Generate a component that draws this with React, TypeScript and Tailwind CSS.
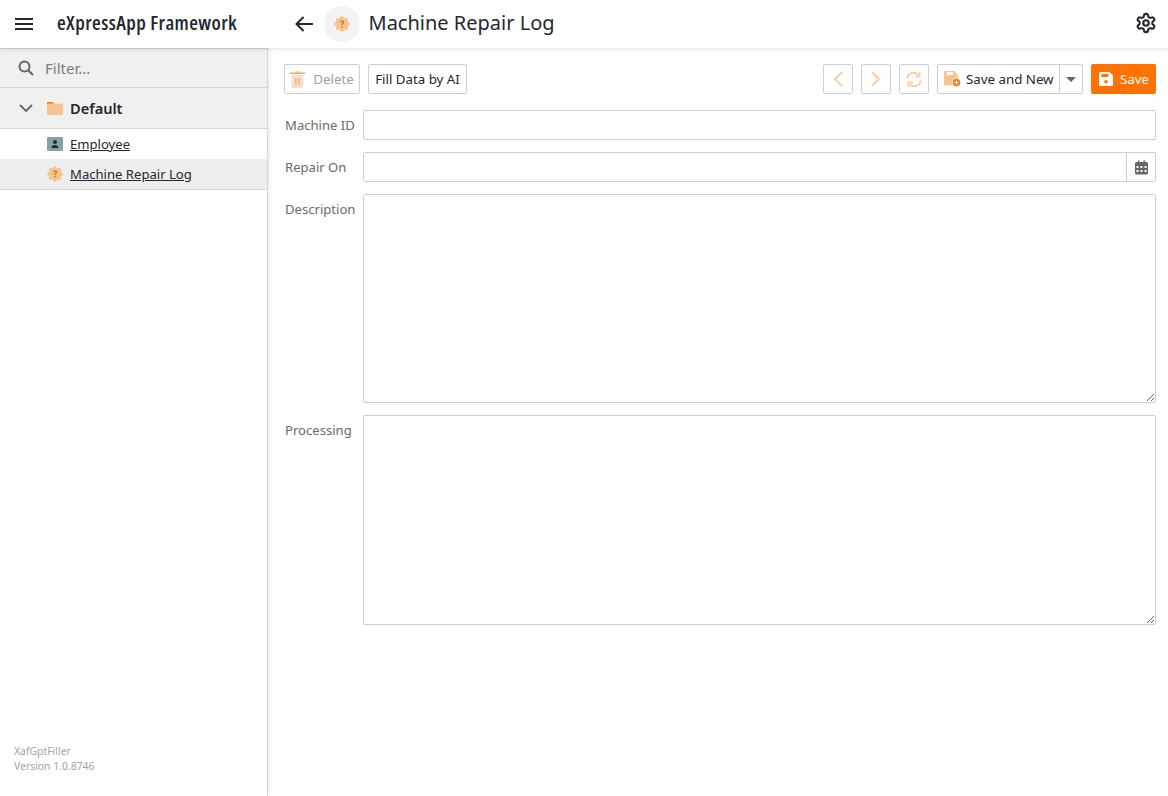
import React from "react";

const Btn = ({ children, className = "" }: { children: React.ReactNode; className?: string }) => (
  <button className={`h-[30px] flex items-center justify-center border border-[#ccd0d6] rounded-[2px] bg-white text-[13.3px] whitespace-nowrap ${className}`}>
    {children}
  </button>
);

const Badge = ({ size }: { size: number }) => (
  <svg width={size} height={size} viewBox="0 0 16 16">
    <g fill="#f6c48f">
      <circle cx="8" cy="8" r="6.2" />
      <circle cx="8" cy="2.2" r="2" />
      <circle cx="8" cy="13.8" r="2" />
      <circle cx="2.2" cy="8" r="2" />
      <circle cx="13.8" cy="8" r="2" />
      <circle cx="3.9" cy="3.9" r="2" />
      <circle cx="12.1" cy="3.9" r="2" />
      <circle cx="3.9" cy="12.1" r="2" />
      <circle cx="12.1" cy="12.1" r="2" />
    </g>
    <path d="M5.8 6.2C5.9 4.9 6.8 4.2 8.1 4.2c1.3 0 2.2.8 2.2 1.9 0 .9-.5 1.4-1.1 1.8-.4.3-.5.5-.5 1H7.3c0-1 .3-1.5 1-1.9.4-.3.6-.5.6-.9 0-.4-.3-.7-.8-.7-.5 0-.8.3-.9.8zM7.2 10h1.5v1.6H7.2z" fill="#d9741c" />
  </svg>
);

const Field = ({ label, children, top = "items-center" }: { label: string; children: React.ReactNode; top?: string }) => (
  <div className={`flex ${top}`}>
    <label className={`w-[79px] shrink-0 pl-px text-[13.1px] leading-[20px] text-[#6f6a66] ${top === "items-start" ? "pt-[5px]" : ""}`}>{label}</label>
    {children}
  </div>
);

export default function App() {
  return (
    <div className="w-[1168px] h-[796px] overflow-hidden bg-white flex flex-col text-[#1f2530] font-['Noto_Sans','Open_Sans',sans-serif]">
      <header className="relative z-20 h-[48px] shrink-0 flex items-center bg-white shadow-[0_1px_4px_rgba(0,0,0,0.12)]">
        <div className="w-[268px] shrink-0 flex items-center">
          <svg className="ml-[15px]" width="18" height="14" viewBox="0 0 18 14">
            <path d="M0 2h18M0 7h18M0 12h18" stroke="#23272f" strokeWidth="2" fill="none" />
          </svg>
          <span className="ml-[24px] -mt-[2px] text-[20px] tracking-[0.4px] font-semibold whitespace-nowrap text-[#23272f] font-['Open_Sans',sans-serif] font-stretch-[87%]">
            eXpressApp Framework
          </span>
        </div>
        <svg className="ml-[27px] -mt-[1px]" width="18" height="16" viewBox="0 0 18 16">
          <path d="M18 8H1.5M8.5 1L1.5 8l7 7" stroke="#23272f" strokeWidth="2" fill="none" />
        </svg>
        <div className="ml-[11px] w-[36px] h-[36px] rounded-full bg-[#f3f3f3] flex items-center justify-center">
          <Badge size={16} />
        </div>
        <h1 className="ml-[8.5px] -mt-[2px] text-[20px] font-normal text-[#23272f]">Machine Repair Log</h1>
        <svg className="ml-auto mr-[11px] -mt-[2px]" width="22" height="22" viewBox="0 0 24 24" fill="none" stroke="#23272f" strokeWidth="2.3" strokeLinecap="round" strokeLinejoin="round">
          <path d="M12.22 2h-.44a2 2 0 0 0-2 2v.18a2 2 0 0 1-1 1.73l-.43.25a2 2 0 0 1-2 0l-.15-.08a2 2 0 0 0-2.73.73l-.22.38a2 2 0 0 0 .73 2.73l.15.1a2 2 0 0 1 1 1.72v.51a2 2 0 0 1-1 1.74l-.15.09a2 2 0 0 0-.73 2.73l.22.38a2 2 0 0 0 2.73.73l.15-.08a2 2 0 0 1 2 0l.43.25a2 2 0 0 1 1 1.73V20a2 2 0 0 0 2 2h.44a2 2 0 0 0 2-2v-.18a2 2 0 0 1 1-1.73l.43-.25a2 2 0 0 1 2 0l.15.08a2 2 0 0 0 2.73-.73l.22-.39a2 2 0 0 0-.73-2.73l-.15-.08a2 2 0 0 1-1-1.74v-.5a2 2 0 0 1 1-1.74l.15-.09a2 2 0 0 0 .73-2.73l-.22-.38a2 2 0 0 0-2.73-.73l-.15.08a2 2 0 0 1-2 0l-.43-.25a2 2 0 0 1-1-1.73V4a2 2 0 0 0-2-2z" />
          <circle cx="12" cy="12" r="3" />
        </svg>
      </header>

      <div className="flex flex-1 min-h-0">
        <aside className="relative z-10 w-[268px] shrink-0 flex flex-col bg-white border-r border-[#d3d6dc] shadow-[1px_0_4px_rgba(0,0,0,0.1)]">
          <div className="h-[40px] flex items-center bg-[#f0f0f0] border-t border-b border-[#d3d6dc]">
            <svg className="ml-[18px]" width="16" height="16" viewBox="0 0 16 16" fill="none" stroke="#666" strokeWidth="2">
              <circle cx="6.5" cy="6.5" r="5" />
              <path d="M10.2 10.2L15 15" />
            </svg>
            <span className="ml-[11px] text-[15px] text-[#7b7b7b]">Filter...</span>
          </div>
          <div className="h-[41px] flex items-center bg-[#f0f0f0] border-b border-[#d3d6dc]">
            <svg className="ml-[19px]" width="14" height="9" viewBox="0 0 14 9" fill="none" stroke="#666" strokeWidth="1.8">
              <path d="M1 1l6 6 6-6" />
            </svg>
            <svg className="ml-[14px]" width="16" height="14" viewBox="0 0 16 14">
              <path d="M0 2a1 1 0 0 1 1-1h4.5l1.5 1.5V4H0z" fill="#e07b1a" />
              <rect x="0" y="2.5" width="16" height="11.5" rx="1.5" fill="#f6c48f" />
            </svg>
            <span className="ml-[7px] mt-[2px] text-[14.6px] font-semibold text-[#23272f]">Default</span>
          </div>
          <div className="h-[30px] flex items-center">
            <svg className="ml-[47px]" width="16" height="14" viewBox="0 0 16 14">
              <rect width="16" height="14" rx="1" fill="#87a3a0" />
              <circle cx="8" cy="5" r="2" fill="#1c2a3a" />
              <path d="M4.5 11c0-2 1.5-3 3.5-3s3.5 1 3.5 3z" fill="#1c2a3a" />
            </svg>
            <span className="ml-[7px] mt-[2px] text-[13.1px] underline text-[#23272f]">Employee</span>
          </div>
          <div className="h-[31px] flex items-center bg-[#eeeeee] border-b border-[#d3d6dc]">
            <div className="ml-[47px] flex"><Badge size={16} /></div>
            <span className="ml-[7px] mt-[2px] text-[13.1px] underline text-[#23272f]">Machine Repair Log</span>
          </div>
          <div className="mt-auto pl-[14px] pb-[22px] text-[10.4px] leading-[15px] text-[#a3a3a3]">
            <div>XafGptFiller</div>
            <div>Version 1.0.8746</div>
          </div>
        </aside>

        <main className="flex-1 min-w-0 pl-[16px] pr-[12px] pt-[16px]">
          <div className="flex items-center">
            <Btn className="w-[76px] text-[#a0a0a0] gap-[8px]">
              <svg width="15" height="17" viewBox="0 0 15 17">
                <path d="M0 1.5h15V3H0z" fill="#f0a877" />
                <path d="M5 .5h5v1H5z" fill="#f0a877" />
                <path d="M1.5 4h12v11.5a1.5 1.5 0 0 1-1.5 1.5H3a1.5 1.5 0 0 1-1.5-1.5z" fill="#f6dfcb" />
                <path d="M5 7h1.6v7H5zM8.4 7H10v7H8.4z" fill="#eeb68a" />
              </svg>
              <span className="mt-[2px]">Delete</span>
            </Btn>
            <Btn className="ml-[8px] w-[99px] text-[#23272f]"><span className="mt-[2px]">Fill Data by AI</span></Btn>
            <Btn className="ml-auto w-[30px]">
              <svg width="10" height="16" viewBox="0 0 10 16" fill="none" stroke="#f6cfa4" strokeWidth="2"><path d="M9 1L2 8l7 7" /></svg>
            </Btn>
            <Btn className="ml-[8px] w-[30px]">
              <svg width="10" height="16" viewBox="0 0 10 16" fill="none" stroke="#f6cfa4" strokeWidth="2"><path d="M1 1l7 7-7 7" /></svg>
            </Btn>
            <Btn className="ml-[8px] w-[30px]">
              <svg width="16" height="15" viewBox="0 0 16 15" fill="none" stroke="#f6cfa4" strokeWidth="2">
                <path d="M1.5 6.5A6 6 0 0 1 12.5 3.5M14.5 8.5A6 6 0 0 1 3.5 11.5" />
                <path d="M13.6 0v4.6H9M2.4 15v-4.6H7" strokeWidth="1.6" />
              </svg>
            </Btn>
            <div className="ml-[8px] h-[30px] flex border border-[#ccd0d6] rounded-[2px] text-[13.3px] whitespace-nowrap">
              <div className="w-[122px] flex items-center pl-[6px] gap-[5px] border-r border-[#ccd0d6] text-[#23272f]">
                <svg width="17" height="16" viewBox="0 0 17 16">
                  <path d="M0 1.5A1.5 1.5 0 0 1 1.5 0H10l4 4v9a1.5 1.5 0 0 1-1.5 1.5h-11A1.5 1.5 0 0 1 0 13z" fill="#f6c48f" />
                  <rect x="3" y="1" width="6" height="3" fill="#fff" />
                  <circle cx="12.5" cy="11.5" r="4.2" fill="#e07b1a" stroke="#fff" strokeWidth="0.8" />
                  <path d="M10.5 11.5h4M12.5 9.5v4" stroke="#fff" strokeWidth="1.2" />
                </svg>
                <span className="mt-[2px]">Save and New</span>
              </div>
              <div className="w-[22px] flex items-center justify-center">
                <svg width="10" height="5" viewBox="0 0 10 5"><path d="M0 0h10L5 5z" fill="#666" /></svg>
              </div>
            </div>
            <button className="ml-[8px] w-[65px] h-[30px] flex items-center justify-center gap-[7px] pl-px rounded-[2px] bg-[#ff7200] text-white text-[13.3px]">
              <svg width="14" height="14" viewBox="0 0 14 14">
                <path fillRule="evenodd" fill="#fff" d="M1.5 0H10.5L14 3.5V12.5A1.5 1.5 0 0 1 12.5 14H1.5A1.5 1.5 0 0 1 0 12.5V1.5A1.5 1.5 0 0 1 1.5 0ZM2.5 2V5H9.5V2ZM7 8A1.8 1.8 0 1 0 7 11.6 1.8 1.8 0 1 0 7 8Z" />
              </svg>
              <span className="mt-[2px]">Save</span>
            </button>
          </div>

          <div className="mt-[16px] flex flex-col gap-[12px]">
            <Field label="Machine ID">
              <input className="flex-1 h-[30px] border border-[#ccd0d6] rounded-[2px] outline-none" />
            </Field>
            <Field label="Repair On">
              <div className="flex-1 h-[30px] flex border border-[#ccd0d6] rounded-[2px]">
                <input className="flex-1 min-w-0 outline-none" />
                <div className="w-[29px] flex items-center justify-center border-l border-[#ccd0d6]">
                  <svg width="13" height="15" viewBox="0 0 13 14">
                    <path fillRule="evenodd" fill="#666" d="M3 0h1.5v1.5h4V0H10v1.5h1.5A1.5 1.5 0 0 1 13 3v9.5a1.5 1.5 0 0 1-1.5 1.5h-10A1.5 1.5 0 0 1 0 12.5V3a1.5 1.5 0 0 1 1.5-1.5H3zM1.5 5.5v2h2v-2zM5.5 5.5v2h2v-2zM9.5 5.5v2h2v-2zM1.5 9.5v2h2v-2zM5.5 9.5v2h2v-2zM9.5 9.5v2h2v-2z" />
                  </svg>
                </div>
              </div>
            </Field>
            <Field label="Description" top="items-start">
              <textarea className="flex-1 h-[209px] border border-[#ccd0d6] rounded-[2px] outline-none resize-y" />
            </Field>
            <Field label="Processing" top="items-start">
              <textarea className="flex-1 h-[210px] border border-[#ccd0d6] rounded-[2px] outline-none resize-y" />
            </Field>
          </div>
        </main>
      </div>
    </div>
  );
}
